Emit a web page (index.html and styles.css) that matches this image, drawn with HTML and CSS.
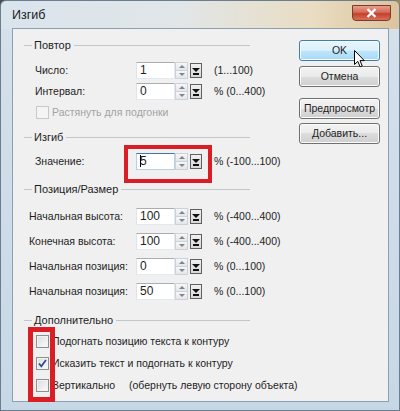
FILE: index.html
```html
<!DOCTYPE html>
<html lang="ru">
<head>
    <meta charset="UTF-8">
    <meta name="viewport" content="width=device-width, initial-scale=1.0">
    <title>Изгиб</title>
    <link rel="stylesheet" href="styles.css">
</head>
<body>
    <div class="window">
        <!-- Заголовок окна -->
        <div class="title-bar">
            <span class="title">Изгиб</span>
            <span class="close-button">
                <svg width="13" height="10" viewBox="0 0 13 10"><path d="M2.5 1 L10.5 9 M10.5 1 L2.5 9" stroke="#fff" stroke-width="2.4"/></svg>
            </span>
        </div>

        <div class="client">
            <div class="settings">
                <!-- Повтор -->
                <div class="group">
                    <div class="group-head"><span>Повтор</span></div>
                    <div class="row">
                        <span class="field-label">Число:</span>
                        <span class="spin"><span class="spin-value">1</span><span class="spin-arrows"><span class="up"></span><span class="down"></span></span></span>
                        <span class="flyout"></span>
                        <span class="range">(1...100)</span>
                    </div>
                    <div class="row">
                        <span class="field-label">Интервал:</span>
                        <span class="spin"><span class="spin-value">0</span><span class="spin-arrows"><span class="up"></span><span class="down"></span></span></span>
                        <span class="flyout"></span>
                        <span class="range">% (0...400)</span>
                    </div>
                    <div class="row check-row disabled">
                        <span class="check"></span>
                        <span>Растянуть для подгонки</span>
                    </div>
                </div>

                <!-- Изгиб -->
                <div class="group group-bend">
                    <div class="group-head"><span>Изгиб</span></div>
                    <div class="row">
                        <span class="field-label">Значение:</span>
                        <span class="spin"><span class="spin-value focused"><span class="caret"></span>5</span><span class="spin-arrows"><span class="up"></span><span class="down"></span></span></span>
                        <span class="flyout"></span>
                        <span class="range">% (-100...100)</span>
                    </div>
                </div>

                <!-- Позиция/Размер -->
                <div class="group group-size">
                    <div class="group-head"><span>Позиция/Размер</span></div>
                    <div class="row">
                        <span class="field-label">Начальная высота:</span>
                        <span class="spin"><span class="spin-value">100</span><span class="spin-arrows"><span class="up"></span><span class="down"></span></span></span>
                        <span class="flyout"></span>
                        <span class="range">% (-400...400)</span>
                    </div>
                    <div class="row">
                        <span class="field-label">Конечная высота:</span>
                        <span class="spin"><span class="spin-value">100</span><span class="spin-arrows"><span class="up"></span><span class="down"></span></span></span>
                        <span class="flyout"></span>
                        <span class="range">% (-400...400)</span>
                    </div>
                    <div class="row">
                        <span class="field-label">Начальная позиция:</span>
                        <span class="spin"><span class="spin-value">0</span><span class="spin-arrows"><span class="up"></span><span class="down"></span></span></span>
                        <span class="flyout"></span>
                        <span class="range">% (0...100)</span>
                    </div>
                    <div class="row">
                        <span class="field-label">Начальная позиция:</span>
                        <span class="spin"><span class="spin-value">50</span><span class="spin-arrows"><span class="up"></span><span class="down"></span></span></span>
                        <span class="flyout"></span>
                        <span class="range">% (0...100)</span>
                    </div>
                </div>

                <!-- Дополнительно -->
                <div class="group group-extra">
                    <div class="group-head"><span>Дополнительно</span></div>
                    <div class="row check-row">
                        <span class="check"></span>
                        <span>Подогнать позицию текста к контуру</span>
                    </div>
                    <div class="row check-row">
                        <span class="check checked">
                            <svg width="11" height="11" viewBox="0 0 11 11"><path d="M2 5.5 L4.3 8.3 L9 2" fill="none" stroke="#2a4a9a" stroke-width="1.7"/></svg>
                        </span>
                        <span>Исказить текст и подогнать к контуру</span>
                    </div>
                    <div class="row check-row">
                        <span class="check"></span>
                        <span>Вертикально</span>
                        <span class="check-note">(обернуть левую сторону объекта)</span>
                    </div>
                </div>
            </div>

            <!-- Кнопки -->
            <div class="actions">
                <span class="button default">OK</span>
                <span class="button">Отмена</span>
                <span class="button preview">Предпросмотр</span>
                <span class="button">Добавить...</span>
            </div>
        </div>

        <!-- Красные выделения -->
        <div class="mark mark-value"></div>
        <div class="mark mark-checks"></div>

        <svg class="cursor" width="11" height="18" viewBox="0 0 11 18"><path d="M0.5 0.5 L0.5 14.5 L3.8 11.4 L6.1 16.8 L8.2 15.9 L6 10.6 L10.3 10.6 Z" fill="#fff" stroke="#000" stroke-width="1"/></svg>
    </div>
</body>
</html>
```

FILE: styles.css
```css
* {
    box-sizing: border-box;
}
body {
    margin: 0;
    background: linear-gradient(90deg, #4d4d4d, #8b7a5c 70%, #a4864f);
    font-family: 'Liberation Sans', Arial, sans-serif;
    font-size: 10.5px;
    color: #1e1e1e;
}
.window {
    position: relative;
    width: 400px;
    height: 411px;
    display: flex;
    flex-direction: column;
    padding: 0 10px 8px 11px;
    border: 1px solid #6b7d8e;
    border-radius: 6px 6px 0 0;
    background:
        linear-gradient(90deg, #dae4ed 0%, #e1e6e8 45%, #e9ddc3 78%, #dcc49b 100%) top / 100% 28px no-repeat,
        linear-gradient(180deg, #d5e1eb 0%, #c6d8e6 100%);
}

/* Заголовок */
.title-bar {
    height: 27px;
    display: flex;
    justify-content: space-between;
    align-items: center;
}
.title-bar .title {
    font-size: 12.5px;
    color: #1a1a1a;
}
.close-button {
    align-self: flex-start;
    margin-top: 4px;
    margin-right: -2px;
    width: 39px;
    height: 16px;
    display: flex;
    align-items: center;
    justify-content: center;
    border: 1px solid #7a3a30;
    border-radius: 0 0 4px 4px;
    background: linear-gradient(180deg, #e6a08f 0%, #d46a55 45%, #c3402c 55%, #d9705a 100%);
}

/* Рабочая область */
.client {
    flex: 1;
    display: flex;
    border: 1px solid #8d9fb0;
    background-color: #f0f0f0;
}
.settings {
    flex: 1;
    padding: 9px 0 0 11px;
}
.group {
    display: flex;
    flex-direction: column;
}
.group-head {
    width: 226px;
    height: 14px;
    display: flex;
    align-items: center;
    font-size: 11px;
}
.group-head:before,
.group-head:after {
    content: '';
    height: 1px;
    background-color: #bfc6cc;
}
.group-head:before {
    width: 8px;
    margin-right: 2px;
}
.group-head:after {
    flex: 1;
    margin-left: 3px;
}
.row {
    height: 20px;
    display: flex;
    align-items: center;
    margin-top: 1px;
    white-space: nowrap;
}
.group-head + .row {
    margin-top: 8px;
}
.field-label {
    width: 101px;
    margin-left: 11px;
}
.group-bend {
    margin-top: 8px;
}
.group-bend .group-head + .row {
    margin-top: 7px;
}
.group-size {
    margin-top: 11px;
}
.group-size .row {
    margin-top: 5px;
}
.group-size .group-head + .row {
    margin-top: 10px;
}
.group-size .field-label {
    width: 107px;
    margin-left: 5px;
}
.group-extra {
    margin-top: 12px;
}
.group-extra .row {
    margin-top: 2px;
}
.group-extra .group-head + .row {
    margin-top: 4px;
}

/* Поле со стрелками */
.spin {
    display: flex;
    height: 17px;
}
.spin-value {
    width: 39px;
    height: 17px;
    padding-left: 3px;
    line-height: 15px;
    font-size: 12px;
    background-color: #fff;
    border: 1px solid;
    border-color: #abadb3 #e3e9ef #e3e9ef #e2e3ea;
}
.spin-value.focused {
    border-color: #3d7bad #b4d1e8 #b4d1e8 #b4d1e8;
}
.spin-value .caret {
    display: inline-block;
    width: 1px;
    height: 12px;
    margin-right: -1px;
    vertical-align: -2px;
    background-color: #000;
}
.spin-arrows {
    width: 13px;
    display: flex;
    flex-direction: column;
}
.spin-arrows span {
    flex: 1;
    display: flex;
    align-items: center;
    justify-content: center;
    background: linear-gradient(180deg, #f7f7f7, #e4e6e8);
    border: 1px solid #cdd2d8;
}
.spin-arrows .up {
    border-bottom: none;
}
.spin-arrows span:before {
    content: '';
    border-left: 3px solid transparent;
    border-right: 3px solid transparent;
}
.spin-arrows .up:before {
    border-bottom: 3px solid #7b8590;
}
.spin-arrows .down:before {
    border-top: 3px solid #7b8590;
}
.flyout {
    position: relative;
    width: 12px;
    height: 15px;
    margin-left: 2px;
    border: 1px solid #5f5f5f;
    background: linear-gradient(180deg, #f0f0f0, #d8d8d8);
}
.flyout:before {
    content: '';
    position: absolute;
    top: 4px;
    left: 1px;
    border-left: 4px solid transparent;
    border-right: 4px solid transparent;
    border-top: 4px solid #111;
}
.flyout:after {
    content: '';
    position: absolute;
    top: 9px;
    left: 2px;
    width: 6px;
    height: 2px;
    background-color: #111;
}
.range {
    margin-left: 12px;
}

/* Флажки */
.check-row {
    padding-left: 12px;
}
.check {
    width: 13px;
    height: 13px;
    margin-right: 3px;
    display: flex;
    align-items: center;
    justify-content: center;
    border: 1px solid #8e8f8f;
    background: linear-gradient(135deg, #dadbdc, #fcfcfc);
    box-shadow: inset 0 0 0 1px #f2f2f2;
}
.check-row.disabled {
    color: #a3a3a3;
}
.check-row.disabled .check {
    border-color: #c8c8c8;
    background: #f4f4f4;
    box-shadow: none;
}
.check-note {
    margin-left: 14px;
}

/* Кнопки */
.actions {
    width: 81px;
    margin: 11px 8px 0 auto;
    display: flex;
    flex-direction: column;
}
.button {
    height: 21px;
    margin-top: 5px;
    text-align: center;
    line-height: 19px;
    font-size: 10.5px;
    border: 1px solid #707070;
    border-radius: 3px;
    background: linear-gradient(180deg, #f2f2f2 0%, #ebebeb 50%, #dddddd 50%, #cfcfcf 100%);
    box-shadow: inset 0 0 0 1px #fbfbfb;
}
.button.default {
    margin-top: 0;
    border-color: #3c7fb1;
    background: linear-gradient(180deg, #eaf6fd 0%, #d9f0fc 50%, #bee6fd 50%, #a7d9f5 100%);
}
.button.preview {
    margin-top: 11px;
}
.button.preview + .button {
    margin-top: 4px;
}

/* Выделения поверх */
.mark {
    position: absolute;
    border: 4px solid #db1d26;
}
.mark-value {
    left: 123px;
    top: 144px;
    width: 88px;
    height: 38px;
}
.mark-checks {
    left: 27px;
    top: 326px;
    width: 27px;
    height: 75px;
    border-width: 5px;
}
.cursor {
    position: absolute;
    left: 353px;
    top: 49px;
}
```
